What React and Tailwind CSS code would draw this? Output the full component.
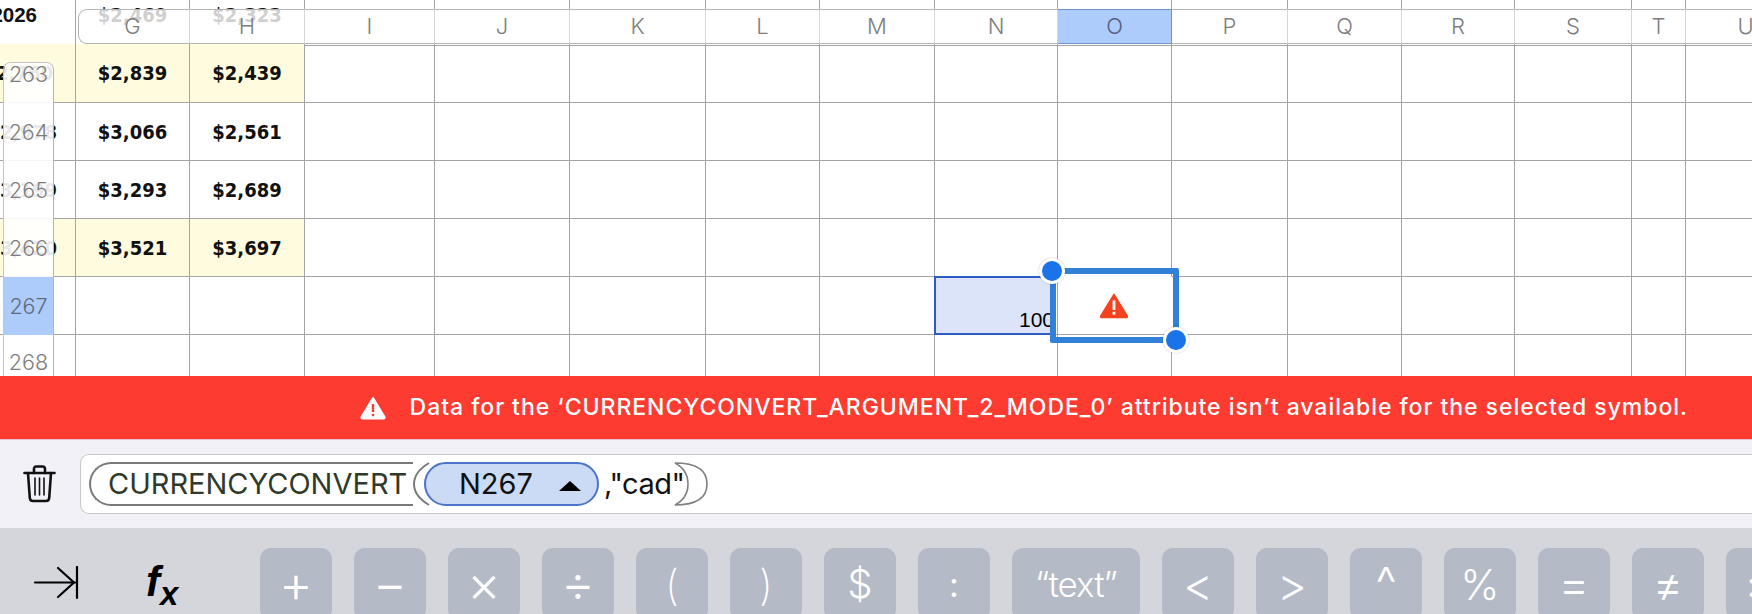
const gridCols =
  "grid grid-cols-[76px_114px_115px_130px_135px_136px_114px_115px_123px_114px_116px_114px_113px_117px_54px_120px]";

const colLabels = ["G", "H", "I", "J", "K", "L", "M", "N", "O", "P", "Q", "R", "S", "T", "U"];

const dataRows = [
  { f: "$2,469", g: "$2,469", h: "$2,323", height: "h-[44px]", pad: "pb-[14px]" },
  { f: "$2,760", g: "$2,839", h: "$2,439", height: "h-[59px]", pad: "", yellow: true, shiftF: true },
  { f: "$2,978", g: "$3,066", h: "$2,561", height: "h-[58px]", pad: "" },
  { f: "$3,199", g: "$3,293", h: "$2,689", height: "h-[58px]", pad: "" },
  { f: "$3,420", g: "$3,521", h: "$3,697", height: "h-[58px]", pad: "", yellow: true },
  { height: "h-[58px]", pad: "", formula: true },
  { height: "h-[41px]", pad: "", last: true },
];

const rowNumbers = [
  { n: "263", className: "h-[40px] items-start pt-0" },
  { n: "264", className: "h-[58px] items-center" },
  { n: "265", className: "h-[58px] items-center" },
  { n: "266", className: "h-[58px] items-center" },
  { n: "267", className: "h-[58px] items-center bg-[#adcbfb] text-[#5e6a80]", active: true },
  { n: "268", className: "h-[42px] items-start pt-[16px]" },
];

const keys = [
  { label: "+", w: "w-[72px]", text: "text-[52px] font-light" },
  { label: "−", w: "w-[72px]", text: "text-[52px] font-light" },
  { label: "×", w: "w-[72px]", text: "text-[52px] font-light" },
  { label: "÷", w: "w-[72px]", text: "text-[52px] font-light" },
  { label: "(", w: "w-[72px]", text: "text-[42px] font-extralight" },
  { label: ")", w: "w-[72px]", text: "text-[42px] font-extralight" },
  { label: "$", w: "w-[72px]", text: "text-[40px] font-light" },
  { label: ":", w: "w-[72px]", text: "text-[34px] font-normal" },
  { label: "“text”", w: "w-[128px]", text: "text-[35px] font-light tracking-[-1px]" },
  { label: "<", w: "w-[72px]", text: "text-[46px] font-light" },
  { label: ">", w: "w-[72px]", text: "text-[46px] font-light" },
  { label: "^", w: "w-[72px]", text: "text-[48px] font-light" },
  { label: "%", w: "w-[72px]", text: "text-[42px] font-light" },
  { label: "=", w: "w-[72px]", text: "text-[48px] font-light" },
  { label: "≠", w: "w-[72px]", text: "text-[48px] font-light" },
];

function Sheet() {
  return (
    <div className="relative h-[376px] overflow-hidden bg-white">
      {/* Cells */}
      {dataRows.map((row, r) => (
        <div key={r} className={`${gridCols} w-[2000px] ${row.height}`}>
          {[...Array(16)].map((_, c) => {
            const isYellow = row.yellow && c < 3;
            // the selected O column cell hides the lines that the selection box sits on
            const isOAbove = r === 4 && c === 9;
            const isOCell = r === 5 && c === 9;
            const text = c === 0 ? row.f : c === 1 ? row.g : c === 2 ? row.h : null;
            return (
              <div
                key={c}
                className={`flex items-center border-r border-r-[#a4a4a4] ${
                  row.last ? "" : isOAbove ? "border-b border-b-white" : "border-b border-b-[#a4a4a4]"
                } ${isOCell ? "border-r-white" : ""} ${isYellow ? "bg-[#fefbde]" : ""} ${
                  c === 0 ? (row.shiftF ? "justify-end pr-[22px]" : "justify-end pr-[18px]") : "justify-center"
                } ${row.pad}`}
              >
                {r === 0 && c === 0 ? (
                  <span className="shrink-0 pr-[20px] font-['Liberation_Sans',sans-serif] text-[20.5px] font-bold text-[#111]">
                    2026
                  </span>
                ) : (
                  text && (
                    <span className="shrink-0 font-['DejaVu_Sans_Condensed','DejaVu_Sans',sans-serif] text-[20px] font-bold leading-[30px] text-[#111]">
                      {text}
                    </span>
                  )
                )}
              </div>
            );
          })}
        </div>
      ))}

      {/* Frozen column header */}
      <div className={`${gridCols} absolute left-0 top-[9px] h-[34px] w-[2000px]`}>
        <div />
        {colLabels.map((label, i) => (
          <div
            key={label}
            className={`flex items-center justify-center border-y border-r font-['Inter',sans-serif] text-[22px] font-light ${
              label === "O"
                ? "border-[#6f93c9] bg-[#adcbfb] text-[#55607a]"
                : "border-[#b4b4b4] border-r-[#d6d6d6] bg-white/80 text-[#7d7d7d]"
            } ${i === 0 ? "ml-[2px] rounded-l-[9px] border-l pr-[3px]" : ""}`}
          >
            {label}
          </div>
        ))}
      </div>

      {/* Frozen row header */}
      <div className="absolute left-[3px] top-[62px] w-[51px] overflow-hidden rounded-tr-[8px] rounded-tl-[8px] border-x border-t border-[#c4c4c4] border-r-[#b4b4b4]">
        {rowNumbers.map((row) => (
          <div
            key={row.n}
            className={`flex justify-center font-['Inter',sans-serif] text-[21.5px] font-light leading-[22px] ${
              row.active ? "" : "bg-white/90 text-[#7d7d7d]"
            } ${row.className}`}
          >
            {row.n}
          </div>
        ))}
      </div>

      {/* Referenced cell N267 */}
      <div className="absolute left-[934px] top-[276px] flex h-[59px] w-[118px] items-end justify-end overflow-hidden border-2 border-[#2d5cc5] bg-[#dbe4f8] font-['Liberation_Sans',sans-serif] text-[21px] leading-[24px] text-black">
        <span className="mb-[1px] mr-[-4px]">100</span>
      </div>

      {/* Selection box on O267 */}
      <div className="absolute left-[1050px] top-[268px] flex h-[75px] w-[129px] items-center justify-center rounded-[2px] border-[6px] border-[#3380d8]">
        <svg width="30" height="26" viewBox="0 0 30 26" className="mr-[2px]">
          <path
            d="M15 1.5 L28.2 23 Q28.8 24.6 27 24.6 L3 24.6 Q1.2 24.6 1.8 23 Z"
            fill="#f4431f"
            stroke="#f4431f"
            strokeWidth="1.5"
            strokeLinejoin="round"
          />
          <rect x="13.6" y="7.5" width="2.8" height="9.5" fill="#fff" />
          <rect x="13.6" y="18.8" width="2.8" height="2.8" fill="#fff" />
        </svg>
      </div>
      <div className="absolute left-[1039px] top-[258px] h-[26px] w-[26px] rounded-full border-[3px] border-white bg-[#1a73e8] shadow-[0_0_2px_rgba(0,0,0,0.25)]" />
      <div className="absolute left-[1163px] top-[327px] h-[26px] w-[26px] rounded-full border-[3px] border-white bg-[#1a73e8] shadow-[0_0_2px_rgba(0,0,0,0.25)]" />
    </div>
  );
}

function ErrorBar() {
  return (
    <div className="flex h-[64px] items-center justify-end gap-[24px] border-b border-b-[#e8c4cc] bg-[#fe3b30] pr-[64px] font-['Inter',sans-serif] text-[23px] font-medium tracking-[0.97px] text-white">
      <svg width="26" height="24" viewBox="0 0 26 24">
        <path
          d="M13 2 L24.5 21 Q25 22.5 23.5 22.5 L2.5 22.5 Q1 22.5 1.5 21 Z"
          fill="#fff"
          stroke="#fff"
          strokeWidth="2"
          strokeLinejoin="round"
        />
        <rect x="11.8" y="8" width="2.4" height="8" fill="#fe3b30" />
        <rect x="11.8" y="17.8" width="2.4" height="2.4" fill="#fe3b30" />
      </svg>
      <span>Data for the ‘CURRENCYCONVERT_ARGUMENT_2_MODE_0’ attribute isn’t available for the selected symbol.</span>
    </div>
  );
}

function FormulaBar() {
  return (
    <div className="flex h-[88px] items-center bg-[#f1f1f7] pl-[23px]">
      <svg width="33" height="38" viewBox="0 0 33 38" fill="none" stroke="#111" strokeWidth="2.6" strokeLinecap="round" strokeLinejoin="round">
        <path d="M1.5 8 H31.5" />
        <path d="M11 8 V4 Q11 1.5 13.5 1.5 H19.5 Q22 1.5 22 4 V8" />
        <path d="M5 8 L6.8 33 Q7 36 10 36 H23 Q26 36 26.2 33 L28 8" />
        <path d="M12 13 V30 M16.5 13 V30 M21 13 V30" strokeWidth="1.6" />
      </svg>
      <div className="ml-[24px] flex h-[60px] flex-1 items-center rounded-l-[9px] border-y border-l border-[#c8c8c8] bg-white pl-[8px] font-['Inter',sans-serif] text-[29px] leading-[36px]">
        <div className="flex h-[44px] w-[324px] items-center rounded-l-full border-y-2 border-l-2 border-[#7a7a7a] bg-white pl-[17px] text-[#2f3a2c]">
          CURRENCYCONVERT
        </div>
        <svg width="20" height="44" viewBox="0 0 20 44" fill="none" className="mr-[-9px] shrink-0">
          <path d="M14 1 Q-1 10 -1 22 Q-1 34 14 43" stroke="#7a7a7a" strokeWidth="2" transform="translate(2 0)" />
        </svg>
        <div className="z-10 flex h-[44px] w-[175px] shrink-0 items-center rounded-full border-2 border-[#4a74c9] bg-[#cbdaf5] pl-[33px] text-[#111]">
          <span>N267</span>
          <svg width="22" height="10" viewBox="0 0 22 10" className="ml-[26px] mt-[3px]">
            <path d="M11 0 L22 10 H0 Z" fill="#000" />
          </svg>
        </div>
        <span className="ml-[5px] tracking-[-0.5px] text-[#111]">,"cad"</span>
        <svg width="34" height="44" viewBox="0 0 34 44" fill="none" className="ml-[-10px] shrink-0">
          <path d="M1 1 Q33 1 33 22 Q33 43 1 43 Q14 36 14 22 Q14 8 1 1 Z" stroke="#808080" strokeWidth="1.6" />
        </svg>
      </div>
    </div>
  );
}

function KeyRow() {
  return (
    <div className="flex h-[86px] gap-[22px] overflow-hidden bg-[#d5d6dc] pt-[20px]">
      <div className="flex w-[238px] shrink-0 items-start">
        <svg width="46" height="34" viewBox="0 0 46 34" fill="none" stroke="#000" strokeWidth="2.2" strokeLinecap="round" strokeLinejoin="round" className="ml-[33px] mt-[18px] shrink-0">
          <path d="M2 16.5 H42" />
          <path d="M25 2 L41 16.5 L25 31" />
          <path d="M44 1 V32" />
        </svg>
        <span className="ml-[67px] mt-[12px] font-['Liberation_Sans',sans-serif] text-[42px] font-bold italic leading-[44px] text-black">
          f
        </span>
        <span className="mt-[28px] font-['Liberation_Sans',sans-serif] text-[33px] font-bold italic leading-[36px] text-black">
          x
        </span>
      </div>
      {keys.map((key) => (
        <div
          key={key.label}
          className={`flex h-[72px] shrink-0 items-center justify-center rounded-[11px] bg-[#b4bac6] font-['Inter',sans-serif] text-white ${key.w} ${key.text}`}
        >
          {key.label}
        </div>
      ))}
      <div className="flex h-[72px] w-[72px] shrink-0 items-center rounded-[11px] bg-[#b4bac6] pl-[21px] font-['Inter',sans-serif] text-[34px] text-white">
        :
      </div>
    </div>
  );
}

export default function App() {
  return (
    <div className="h-[614px] w-[1752px] overflow-hidden bg-white">
      <Sheet />
      <ErrorBar />
      <FormulaBar />
      <KeyRow />
    </div>
  );
}
